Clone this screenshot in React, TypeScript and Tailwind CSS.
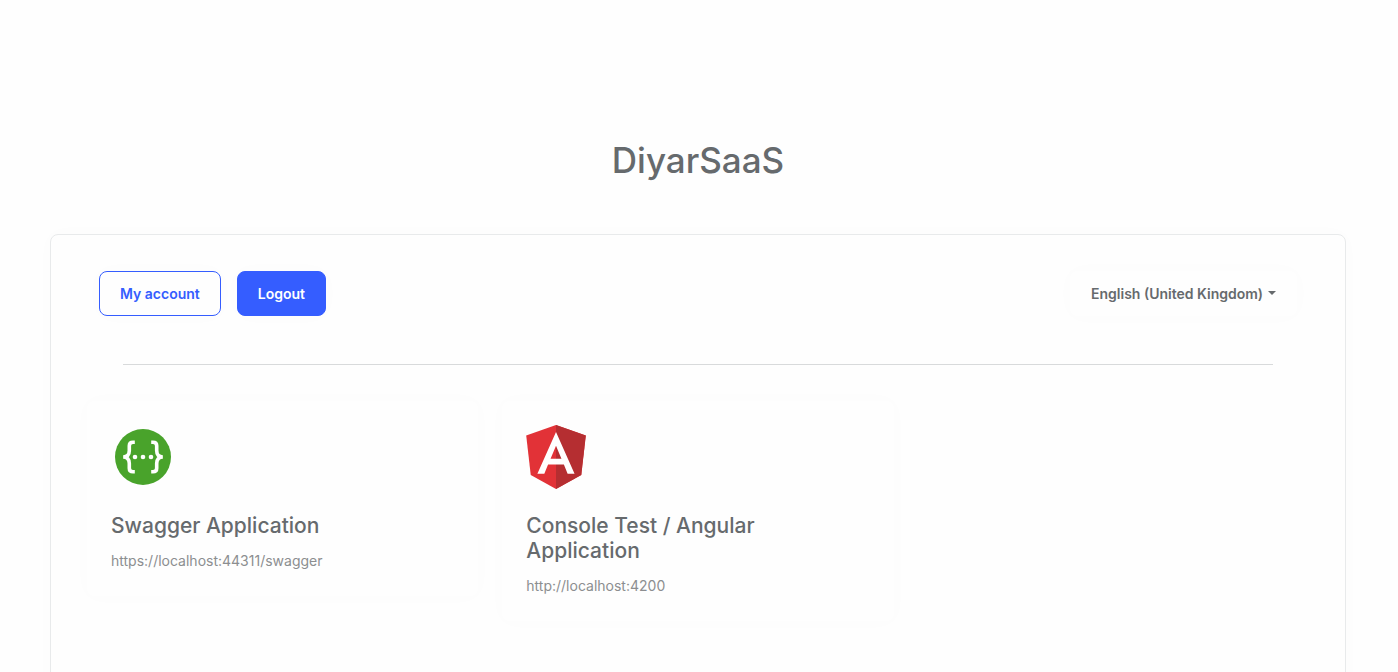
import type { ReactNode } from "react";

type Application = {
  name: string;
  url: string;
  icon: ReactNode;
};

function SwaggerLogo() {
  return (
    <svg viewBox="0 0 64 64" className="h-16 w-16" aria-hidden="true">
      <circle cx="32" cy="32" r="28" fill="#49a32b" />
      <g fill="none" stroke="#fff" strokeWidth="3.6">
        <path d="M23.8 17.2H22C19.6 17.2 18.3 18.5 18.3 20.8V25.5C18.3 29.4 16.2 31.9 12.2 32C16.2 32.1 18.3 34.6 18.3 38.5V43.2C18.3 45.5 19.6 46.8 22 46.8H23.8" />
        <path d="M40.2 17.2H42C44.4 17.2 45.7 18.5 45.7 20.8V25.5C45.7 29.4 47.8 31.9 51.8 32C47.8 32.1 45.7 34.6 45.7 38.5V43.2C45.7 45.5 44.4 46.8 42 46.8H40.2" />
      </g>
      <g fill="#fff">
        <circle cx="24" cy="32" r="2.3" />
        <circle cx="32" cy="32" r="2.3" />
        <circle cx="40" cy="32" r="2.3" />
      </g>
    </svg>
  );
}

function AngularLogo() {
  return (
    <svg viewBox="31.9 30 186.2 200" className="h-16 w-[60px]" aria-hidden="true">
      <path fill="#e23237" d="M125 30L31.9 63.2l14.2 123.1L125 230l78.9-43.7 14.2-123.1z" />
      <path fill="#b52e31" d="M125 30v200l78.9-43.7 14.2-123.1z" />
      <path
        fill="#fff"
        d="M125 52.1L66.8 182.6h21.7l11.7-29.2h49.4l11.7 29.2H183zm17 83.3h-34l17-40.9z"
      />
    </svg>
  );
}

const applications: Application[] = [
  {
    name: "Swagger Application",
    url: "https://localhost:44311/swagger",
    icon: <SwaggerLogo />,
  },
  {
    name: "Console Test / Angular Application",
    url: "http://localhost:4200",
    icon: <AngularLogo />,
  },
];

function LanguageSelect() {
  return (
    <div className="relative rounded-lg shadow-[0_0_20px_rgba(0,0,0,0.015)]">
      <select
        aria-label="Language"
        defaultValue="en-GB"
        className="h-[45px] appearance-none rounded-lg bg-transparent pr-[33px] pl-[21px] text-sm font-semibold"
      >
        <option value="en-GB">English (United Kingdom)</option>
      </select>
      <span
        aria-hidden="true"
        className="pointer-events-none absolute top-5 right-[21px] border-x-4 border-t-4 border-x-transparent border-t-current"
      />
    </div>
  );
}

function ApplicationCard({ name, url, icon }: Application) {
  return (
    <article className="rounded-lg p-6 shadow-[0_0_20px_rgba(0,0,0,0.015)]">
      {icon}
      <h2 className="mt-6 max-w-[260px] text-[21px] leading-[25px] font-medium">{name}</h2>
      <a href={url} className="mt-3 block text-sm leading-[22px] text-[#8c8e90]">
        {url}
      </a>
    </article>
  );
}

export default function App() {
  return (
    <main className="min-h-screen overflow-hidden bg-[#fefefe] pt-[138px] pr-[52px] pl-[50px] font-[Inter,sans-serif] text-[#666a6d]">
      <h1 className="text-center text-[35px] leading-[44px] font-medium">DiyarSaaS</h1>

      <section className="mt-[52px] min-h-[480px] rounded-lg border border-[#e8eaeb] px-6 pt-9 shadow-[0_0_20px_rgba(0,0,0,0.015)]">
        <div className="flex items-center justify-between px-6">
          <div className="flex gap-4">
            <button
              type="button"
              className="h-[45px] rounded-lg border border-[#355dff] px-5 text-sm font-semibold text-[#355dff] shadow-[0_0_20px_rgba(0,0,0,0.015)]"
            >
              My account
            </button>
            <button
              type="button"
              className="h-[45px] rounded-lg border border-[#355dff] bg-[#355dff] px-5 text-sm font-semibold text-white shadow-[0_0_20px_rgba(0,0,0,0.015)]"
            >
              Logout
            </button>
          </div>
          <LanguageSelect />
        </div>

        <hr className="mx-12 mt-12 border-[#d8dadb]" />

        <div className="mt-9 grid grid-cols-3 items-start gap-6 px-3">
          {applications.map((application) => (
            <ApplicationCard key={application.url} {...application} />
          ))}
        </div>
      </section>
    </main>
  );
}
